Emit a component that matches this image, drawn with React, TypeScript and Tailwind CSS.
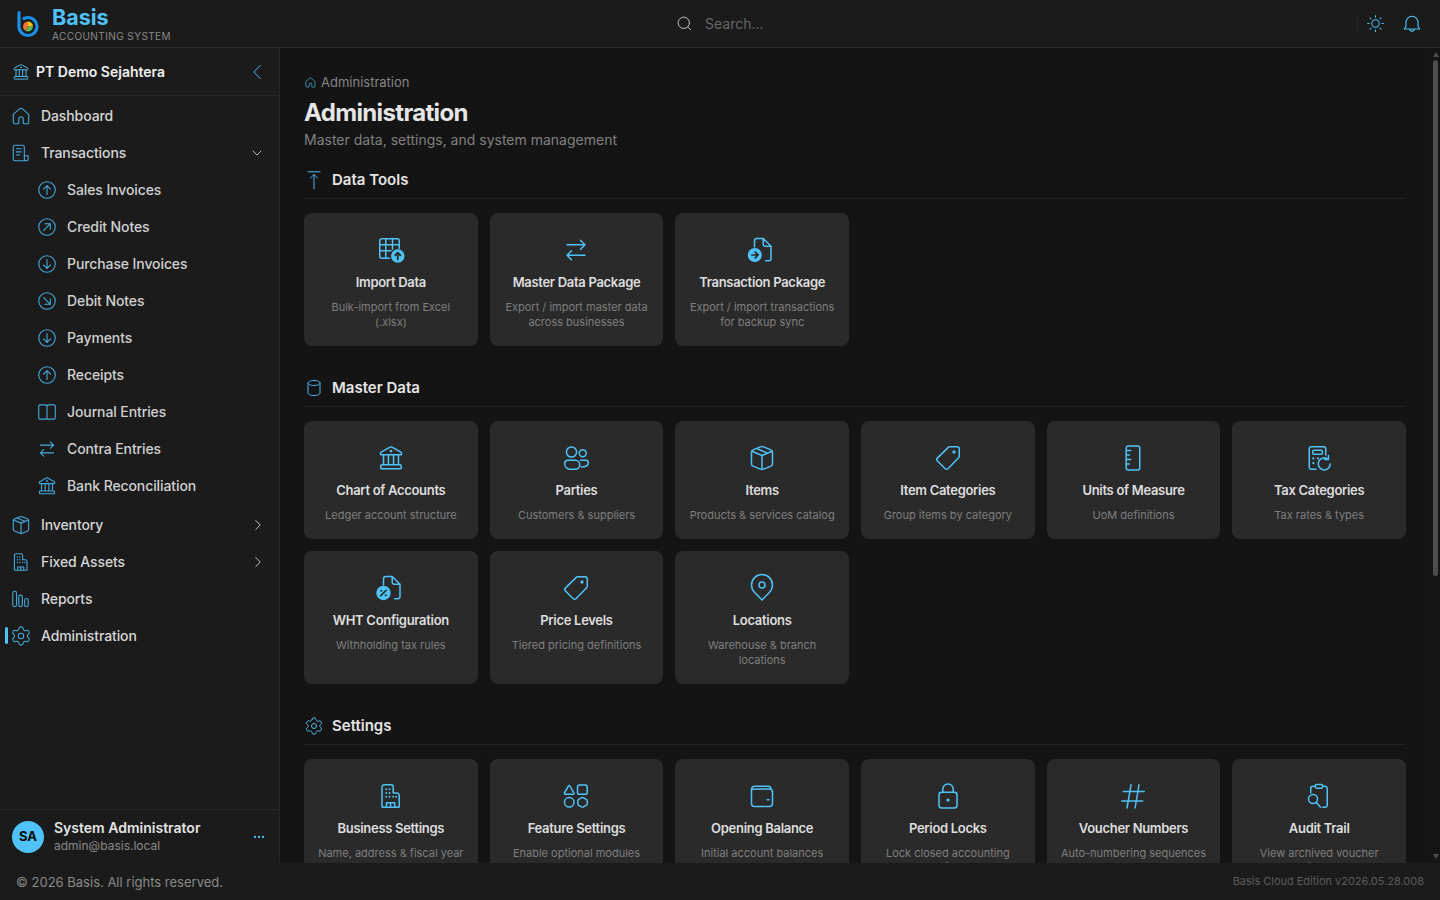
import { Settings, Search, ChevronDown, ChevronRight, ChevronLeft, MoreHorizontal, type LucideIcon } from "lucide-react"
import type { ReactNode } from "react"

const font = { fontFamily: "Inter, 'Noto Sans', sans-serif" }

function Ico({ size = 20, className = "", children }: { size?: number; className?: string; children: ReactNode }) {
  return (
    <svg width={size} height={size} viewBox="0 0 20 20" fill="none" stroke="currentColor" strokeWidth={1} strokeLinecap="round" strokeLinejoin="round" className={`shrink-0 ${className}`}>
      {children}
    </svg>
  )
}

type IconProps = { size?: number; className?: string }

const Home = (p: IconProps) => <Ico {...p}><path d="M3 8.6 8.7 3.5a2 2 0 0 1 2.6 0L17 8.6v7a1.5 1.5 0 0 1-1.5 1.5H13a1 1 0 0 1-1-1v-3.4a2 2 0 0 0-4 0V16a1 1 0 0 1-1 1H4.5A1.5 1.5 0 0 1 3 15.5z" /></Ico>
const Bank = (p: IconProps) => <Ico {...p}><path d="M9.4 2.8a1.2 1.2 0 0 1 1.2 0l6 3.3c.3.2.4.4.4.7v.5a.5.5 0 0 1-.5.5h-13a.5.5 0 0 1-.5-.5v-.5c0-.3.1-.5.4-.7z" /><path d="M5 8v6.5M8.3 8v6.5M11.7 8v6.5M15 8v6.5M4 14.5h12a.8.8 0 0 1 .8.8v1.4a.4.4 0 0 1-.4.4H3.6a.4.4 0 0 1-.4-.4v-1.4a.8.8 0 0 1 .8-.8z" /><circle cx="10" cy="5.4" r=".4" /></Ico>
const Receipt = (p: IconProps) => <Ico {...p}><path d="M3 4.5A1.5 1.5 0 0 1 4.5 3h7A1.5 1.5 0 0 1 13 4.5v11c0 .9.7 1.5 1.5 1.5h-10A1.5 1.5 0 0 1 3 15.5zM13 12.5h3.5v3a1.5 1.5 0 0 1-1.5 1.5h-.5" /><path d="M5.8 6.2h4.4M5.8 9h4.4M5.8 11.800h3" /></Ico>
const CircleUp = (p: IconProps) => <Ico {...p}><circle cx="10" cy="10" r="7.5" /><path d="M10 14V6M6.8 9.2 10 6l3.2 3.2" /></Ico>
const CircleDown = (p: IconProps) => <Ico {...p}><circle cx="10" cy="10" r="7.5" /><path d="M10 6v8M6.8 10.8 10 14l3.2-3.2" /></Ico>
const CircleUpRight = (p: IconProps) => <Ico {...p}><circle cx="10" cy="10" r="7.5" /><path d="M7 13l6-6M8 7h5v5" /></Ico>
const CircleDownRight = (p: IconProps) => <Ico {...p}><circle cx="10" cy="10" r="7.5" /><path d="M7 7l6 6M13 8v5H8" /></Ico>
const BookOpen = (p: IconProps) => <Ico {...p}><path d="M10 5v11.5M3.5 3.5h5A1.5 1.5 0 0 1 10 5a1.5 1.5 0 0 1 1.5-1.5h5a1 1 0 0 1 1 1v11a1 1 0 0 1-1 1h-13a1 1 0 0 1-1-1v-11a1 1 0 0 1 1-1z" /></Ico>
const Swap = (p: IconProps) => <Ico {...p}><path d="M4 6.5h12M13 3.5l3 3-3 3M16 13.5H4M7 10.5l-3 3 3 3" /></Ico>
const Box = (p: IconProps) => <Ico {...p}><path d="M9 2.6a2.6 2.6 0 0 1 2 0l5 2a1.6 1.6 0 0 1 1 1.5v7.800a1.6 1.6 0 0 1-1 1.5l-5 2a2.6 2.6 0 0 1-2 0l-5-2a1.6 1.6 0 0 1-1-1.5V6.100a1.6 1.6 0 0 1 1-1.5z" /><path d="M3.3 5.5 10 8.3l6.700-2.800M10 8.300v9.200M6.500 3.700l6.800 2.900" /></Ico>
const Building = (p: IconProps) => <Ico {...p}><path d="M4 17V4a1.5 1.5 0 0 1 1.5-1.5H10A1.5 1.5 0 0 1 11.500 4v4H14a1.5 1.5 0 0 1 1.5 1.5V17a.5.5 0 0 1-.5.5H4.500A.5.5 0 0 1 4 17zM7 17.500v-3h5.500v3M9.700 14.500v3" /><path d="M6.800 5.500h.01M9 5.500h.01M6.800 8h.01M9 8h.01M6.800 10.500h.01M9 10.500h.01M11.500 10.500h.01M13.500 10.500h.01" strokeWidth={1.3} /></Ico>
const Histogram = (p: IconProps) => <Ico {...p}><rect x="2.5" y="3" width="3.5" height="14" rx="1.75" /><rect x="8" y="6.5" width="3.2" height="10.5" rx="1.6" /><rect x="13.3" y="9.5" width="3.2" height="7.5" rx="1.6" /></Ico>
const Gear = ({ size = 20, className = "" }: IconProps) => <Settings size={size} strokeWidth={1.15} className={`shrink-0 ${className}`} />
const ArrowTop = (p: IconProps) => <Ico {...p}><path d="M4 1.8h12M10 18.800V4.500M6.500 8 10 4.500 13.500 8" /></Ico>
const Database = (p: IconProps) => <Ico {...p}><path d="M4 5c0-1.4 2.7-2.5 6-2.500s6 1.100 6 2.500v10c0 1.400-2.700 2.500-6 2.500s-6-1.100-6-2.500z" /><path d="M4 5c0 1.400 2.700 2.500 6 2.500s6-1.100 6-2.500" /></Ico>
const TableUp = (p: IconProps) => <Ico {...p}><path d="M9 15.5H3.800a1.3 1.3 0 0 1-1.300-1.300V3.800a1.3 1.3 0 0 1 1.300-1.300h10.400a1.3 1.3 0 0 1 1.300 1.300V9M2.500 6.500h13M2.500 10.500H10M6.500 2.500v13M11 2.500v7" /><circle cx="14.5" cy="14" r="4" fill="currentColor" /><path d="M14.500 16.200V12M12.800 13.500l1.700-1.700 1.700 1.700" stroke="#2a2a2a" strokeWidth={1.2} /></Ico>
const FileArrow = (p: IconProps) => <Ico {...p}><path d="M5 8V3.800a1.5 1.5 0 0 1 1.500-1.500h4.300L16 7.500v8.200a1.5 1.5 0 0 1-1.500 1.500h-2M10.800 2.300V6a1.5 1.5 0 0 0 1.500 1.500H16" /><circle cx="5.2" cy="13.3" r="4.2" fill="currentColor" /><path d="M3.200 13.300h4M5.500 11.400l1.900 1.900-1.900 1.900" stroke="#2a2a2a" strokeWidth={1.1} /></Ico>
const FilePercent = (p: IconProps) => <Ico {...p}><path d="M5 8V3.800a1.5 1.5 0 0 1 1.500-1.500h4.300L16 7.500v8.200a1.5 1.5 0 0 1-1.500 1.500h-2M10.800 2.300V6a1.5 1.5 0 0 0 1.500 1.500H16" /><circle cx="5" cy="13.3" r="4.3" fill="currentColor" /><path d="M3.200 15.100l3.600-3.600" stroke="#2a2a2a" strokeWidth={1.1} /><circle cx="3.5" cy="11.8" r=".7" fill="#2a2a2a" stroke="none" /><circle cx="6.5" cy="14.8" r=".7" fill="#2a2a2a" stroke="none" /></Ico>
const People = (p: IconProps) => <Ico {...p}><circle cx="7" cy="6" r="3.4" /><circle cx="14.5" cy="6.8" r="2.3" /><path d="M4.500 11.500h5a3 3 0 0 1 0 6H6a3.800 3.800 0 0 1-3.500-3.800c0-1.200.9-2.200 2-2.200zM13 11.500h3.500a1.700 1.700 0 0 1 1.700 1.700c0 1.600-1.800 2.800-4.700 2.800" /></Ico>
const Tag = (p: IconProps) => <Ico {...p}><path d="M11.200 2.500H16A1.5 1.5 0 0 1 17.500 4v4.800a1.5 1.5 0 0 1-.4 1l-7 7.200a1.5 1.5 0 0 1-2.100 0l-5-5a1.5 1.5 0 0 1 0-2.100l7.200-7a1.5 1.5 0 0 1 1-.4z" /><circle cx="14" cy="6" r=".6" fill="currentColor" /></Ico>
const Ruler = (p: IconProps) => <Ico {...p}><rect x="5.5" y="2" width="9" height="16" rx="1.3" /><path d="M5.500 5h3M5.500 8h2M5.500 11h3M5.500 14h2" /></Ico>
const Calc = (p: IconProps) => <Ico {...p}><path d="M8 17.500H5A1.5 1.5 0 0 1 3.500 16V4A1.5 1.5 0 0 1 5 2.500h8A1.5 1.5 0 0 1 14.500 4v4" /><rect x="5.8" y="4.8" width="6.5" height="2.7" rx=".8" /><path d="M6.200 10.300h.01M6.200 13.400h.01M9.300 10.300h.01" strokeWidth={1.5} /><path d="M17.500 14a4 4 0 1 1-1.500-3.200M16.300 8.300V11h-2.700" /></Ico>
const Pin = (p: IconProps) => <Ico {...p}><path d="M10 18l-4.900-5a7 7 0 1 1 9.800 0z" /><circle cx="10" cy="8" r="2" /></Ico>
const Shapes = (p: IconProps) => <Ico {...p}><path d="M5.900 3.200 8.600 8a.6.6 0 0 1-.5.900H2.800a.6.6 0 0 1-.5-.900L5 3.200a.5.5 0 0 1 .9 0z" /><rect x="11" y="2.7" width="6.500" height="6.200" rx="1.3" /><circle cx="5.5" cy="14.2" r="3.2" /><path d="M13.700 11.100a1.3 1.3 0 0 1 1.200 0l1.900 1.100c.4.200.7.600.7 1v2c0 .4-.3.800-.7 1l-1.900 1.100a1.3 1.3 0 0 1-1.200 0l-1.900-1.100c-.4-.2-.6-.6-.6-1v-2c0-.4.200-.8.600-1z" /></Ico>
const Wallet = (p: IconProps) => <Ico {...p}><path d="M3 5.500a2 2 0 0 1 2-2h9a2 2 0 0 1 2 1.700M3 5.500V15a2 2 0 0 0 2 2h10a2 2 0 0 0 2-2V7.300a2 2 0 0 0-2-2zM13.500 12.500h1.200" /></Ico>
const Lock = (p: IconProps) => <Ico {...p}><path d="M6.500 7.500v-2a3.500 3.500 0 0 1 7 0v2" /><rect x="4" y="7.5" width="12" height="10.5" rx="1.8" /><circle cx="10" cy="12.7" r=".6" fill="currentColor" /></Ico>
const Hash = (p: IconProps) => <Ico {...p}><path d="M8.700 2.500 6 18M14 2.500 11.400 18M3.500 7h14M2.500 13.300h14" /></Ico>
const ClipSearch = (p: IconProps) => <Ico {...p}><path d="M7.500 3.500H6A1.500 1.500 0 0 0 4.500 5v3M12.500 3.500H14A1.500 1.500 0 0 1 15.500 5v11a1.500 1.500 0 0 1-1.500 1.500h-1.500" /><rect x="7.5" y="2.3" width="5" height="2.5" rx=".9" /><circle cx="6" cy="12" r="3" /><path d="M8.200 14.200 11 17.500" /></Ico>
const Sun = (p: IconProps) => <Ico {...p}><circle cx="10" cy="10" r="3.5" /><path d="M10 2.500V4M10 16v1.500M2.500 10H4M16 10h1.500M4.700 4.700l1 1M14.300 14.300l1 1M4.700 15.300l1-1M14.300 5.700l1-1" /></Ico>
const Bell = (p: IconProps) => <Ico {...p}><path d="M4.500 8.500a5.500 5.500 0 0 1 11 0V12l1.500 2.500H3L4.500 12zM8 14.500a2 2 0 0 0 4 0" /></Ico>

function Logo() {
  return (
    <svg width="24" height="28" viewBox="0 0 24 28" fill="none" className="shrink-0">
      <path d="M3 2.500v14a9 9 0 1 0 9-9c-1.500 0-2.800.3-4 1" stroke="#1a8fe3" strokeWidth="3.2" strokeLinecap="round" />
      <path d="M12 16.500v-5a5 5 0 0 1 5 5z" fill="#f5c518" />
      <path d="M12 16.500h5a5 5 0 0 1-7.500 4.300z" fill="#5cb85c" />
      <path d="M12 16.500 9.500 20.800A5 5 0 0 1 12 11.500z" fill="#f0742b" />
    </svg>
  )
}

type NavItem = { label: string; icon: (p: IconProps) => ReactNode; chevron?: LucideIcon; active?: boolean }

const subItems: NavItem[] = [
  { label: "Sales Invoices", icon: CircleUp },
  { label: "Credit Notes", icon: CircleUpRight },
  { label: "Purchase Invoices", icon: CircleDown },
  { label: "Debit Notes", icon: CircleDownRight },
  { label: "Payments", icon: CircleDown },
  { label: "Receipts", icon: CircleUp },
  { label: "Journal Entries", icon: BookOpen },
  { label: "Contra Entries", icon: Swap },
  { label: "Bank Reconciliation", icon: Bank },
]

function TopRow({ item }: { item: NavItem }) {
  const Chevron = item.chevron
  return (
    <div className="relative flex h-[37px] items-center pl-[10px] pr-[12px]">
      {item.active && <div className="absolute left-[5px] top-[10px] h-[17px] w-[3px] rounded-full bg-[#4fc3f7]" />}
      <item.icon size={22} className="text-[#45a9dd]" />
      <span className="ml-[9px] flex-1 text-sm font-medium tracking-[-0.1px] text-[#d6d6d6]">{item.label}</span>
      {Chevron === ChevronDown && <ChevronDown size={16} strokeWidth={1.3} className="mr-[2px] text-[#d0d0d0]" />}
      {Chevron === ChevronRight && <ChevronRight size={18} strokeWidth={1.2} className="text-[#d0d0d0]" />}
    </div>
  )
}

function Sidebar() {
  return (
    <aside className="flex w-[280px] shrink-0 flex-col border-r border-[#262626] bg-[#1b1b1b]">
      <div className="flex h-[48px] shrink-0 items-center border-b border-[#262626] pl-[11px] pr-[9px]">
        <Bank size={20} className="text-[#4fb4e6]" />
        <span className="ml-[5px] flex-1 text-sm font-semibold text-[#f0f0f0]">PT Demo Sejahtera</span>
        <ChevronLeft size={26} strokeWidth={0.9} className="text-[#4fc3f7]" />
      </div>
      <nav className="flex-1 pt-[1px]">
        <TopRow item={{ label: "Dashboard", icon: Home }} />
        <TopRow item={{ label: "Transactions", icon: Receipt, chevron: ChevronDown }} />
        {subItems.map((s) => (
          <div key={s.label} className="flex h-[37px] items-center pl-[36px]">
            <s.icon size={22} className="text-[#45a9dd]" />
            <span className="ml-[9px] text-sm font-medium tracking-[-0.1px] text-[#d0d0d0]">{s.label}</span>
          </div>
        ))}
        <div className="h-[2px]" />
        <TopRow item={{ label: "Inventory", icon: Box, chevron: ChevronRight }} />
        <TopRow item={{ label: "Fixed Assets", icon: Building, chevron: ChevronRight }} />
        <TopRow item={{ label: "Reports", icon: Histogram }} />
        <TopRow item={{ label: "Administration", icon: Gear, active: true }} />
      </nav>
      <div className="flex h-[54px] shrink-0 items-center border-t border-[#262626] pl-[12px] pr-[12px]">
        <div className="flex h-8 w-8 items-center justify-center rounded-full bg-[#4fc3f7] text-[13px] font-bold text-[#0c0c0c]">SA</div>
        <div className="ml-[10px] flex-1">
          <div className="mb-[2px] text-sm font-semibold leading-[16px] text-[#e4e4e4]">System Administrator</div>
          <div className="text-xs leading-[16px] text-[#8a8a8a]">admin@basis.local</div>
        </div>
        <MoreHorizontal size={14} className="mr-[1px] text-[#4fc3f7]" />
      </div>
    </aside>
  )
}

type Tool = { title: string; desc: string; icon: (p: IconProps) => ReactNode }

const dataTools: Tool[] = [
  { title: "Import Data", desc: "Bulk-import from Excel (.xlsx)", icon: TableUp },
  { title: "Master Data Package", desc: "Export / import master data across businesses", icon: Swap },
  { title: "Transaction Package", desc: "Export / import transactions for backup sync", icon: FileArrow },
]

const masterData: Tool[] = [
  { title: "Chart of Accounts", desc: "Ledger account structure", icon: Bank },
  { title: "Parties", desc: "Customers & suppliers", icon: People },
  { title: "Items", desc: "Products & services catalog", icon: Box },
  { title: "Item Categories", desc: "Group items by category", icon: Tag },
  { title: "Units of Measure", desc: "UoM definitions", icon: Ruler },
  { title: "Tax Categories", desc: "Tax rates & types", icon: Calc },
  { title: "WHT Configuration", desc: "Withholding tax rules", icon: FilePercent },
  { title: "Price Levels", desc: "Tiered pricing definitions", icon: Tag },
  { title: "Locations", desc: "Warehouse & branch locations", icon: Pin },
]

const settings: Tool[] = [
  { title: "Business Settings", desc: "Name, address & fiscal year", icon: Building },
  { title: "Feature Settings", desc: "Enable optional modules", icon: Shapes },
  { title: "Opening Balance", desc: "Initial account balances", icon: Wallet },
  { title: "Period Locks", desc: "Lock closed accounting periods", icon: Lock },
  { title: "Voucher Numbers", desc: "Auto-numbering sequences", icon: Hash },
  { title: "Audit Trail", desc: "View archived voucher history", icon: ClipSearch },
]

function Card({ tool }: { tool: Tool }) {
  return (
    <div className="flex flex-col items-center rounded-lg bg-[#2a2a2a] px-3 pb-[16.75px] pt-[22px] text-center">
      <tool.icon size={30} className="text-[#4fc3f7]" />
      <div className="mt-[8px] text-[13px] font-semibold leading-[18px] tracking-[-0.3px] text-[#dedede]">{tool.title}</div>
      <div className="mt-[9px] text-[11px] leading-[14.5px] text-[#7f7f7f]">{tool.desc}</div>
    </div>
  )
}

function Section({ title, icon: Icon, tools }: { title: string; icon: (p: IconProps) => ReactNode; tools: Tool[] }) {
  return (
    <section className="mb-[25px]">
      <div className="flex h-[36px] items-center border-b border-[#232323] pb-[1px]">
        <Icon className="text-[#4fb8ec]" />
        <h2 className="ml-[8px] text-[15px] font-semibold text-[#e4e4e4]">{title}</h2>
      </div>
      <div className="mt-[14px] grid grid-cols-6 gap-3">
        {tools.map((t) => (
          <Card key={t.title} tool={t} />
        ))}
      </div>
    </section>
  )
}

function Scrollbar() {
  return (
    <div className="flex w-[10px] shrink-0 flex-col items-center bg-[#151515] pl-[1px] pt-[4px]">
      <div className="h-0 w-0 border-x-[3.5px] border-b-[5px] border-x-transparent border-b-[#4d4d4d]" />
      <div className="mt-[3px] h-[516px] w-[5px] rounded-full bg-[#4d4d4d]" />
      <div className="flex-1" />
      <div className="mb-[4px] h-0 w-0 border-x-[3.5px] border-t-[5px] border-x-transparent border-t-[#4d4d4d]" />
    </div>
  )
}

export default function App() {
  return (
    <div style={font} className="flex h-screen flex-col overflow-hidden bg-[#141414]">
      <header className="flex h-[48px] shrink-0 items-center border-b border-[#2a2a2a] bg-[#1b1b1b] pl-[16px] pr-[17px]">
        <Logo />
        <div className="ml-[12px] w-[624px] pt-[2px]">
          <div className="text-[21.5px] font-bold leading-[22px] text-[#4fc3f7]">Basis</div>
          <div className="mt-[1px] text-[10px] leading-[14px] tracking-[0.42px] text-[#8a8a8a]">ACCOUNTING SYSTEM</div>
        </div>
        <Search size={17} strokeWidth={1.3} className="text-[#c8c8c8]" />
        <span className="ml-[12px] flex-1 text-sm text-[#666666]">Search...</span>
        <div className="mr-[7px] h-[24px] w-px bg-[#242424]" />
        <Sun size={21} className="text-[#4fc3f7]" />
        <Bell size={22} className="ml-[15px] text-[#4fc3f7]" />
      </header>
      <div className="flex min-h-0 flex-1">
        <Sidebar />
        <main className="min-w-0 flex-1 overflow-hidden pl-[24px] pr-[24px] pt-[24px]">
          <div className="flex items-center text-[13px] leading-[20px] text-[#858585]">
            <Home size={13} className="text-[#4fc3f7]" />
            <span className="ml-[4px]">Administration</span>
          </div>
          <h1 className="mt-[5px] text-[24px] font-bold leading-[32px] tracking-[-0.65px] text-[#e6e6e6]">Administration</h1>
          <p className="mt-[1px] text-sm leading-[20px] text-[#808080]">Master data, settings, and system management</p>
          <div className="h-[13px]" />
          <Section title="Data Tools" icon={ArrowTop} tools={dataTools} />
          <Section title="Master Data" icon={Database} tools={masterData} />
          <Section title="Settings" icon={Gear} tools={settings} />
        </main>
        <Scrollbar />
      </div>
      <footer className="flex h-[37px] shrink-0 items-center justify-between bg-[#1b1b1b] pl-[16px] pr-[16px]">
        <span className="pt-[2px] text-[13px] text-[#8a8a8a]">© 2026 Basis. All rights reserved.</span>
        <span className="text-[11px] tracking-[-0.02px] text-[#5c5c5c]">Basis Cloud Edition v2026.05.28.008</span>
      </footer>
    </div>
  )
}
